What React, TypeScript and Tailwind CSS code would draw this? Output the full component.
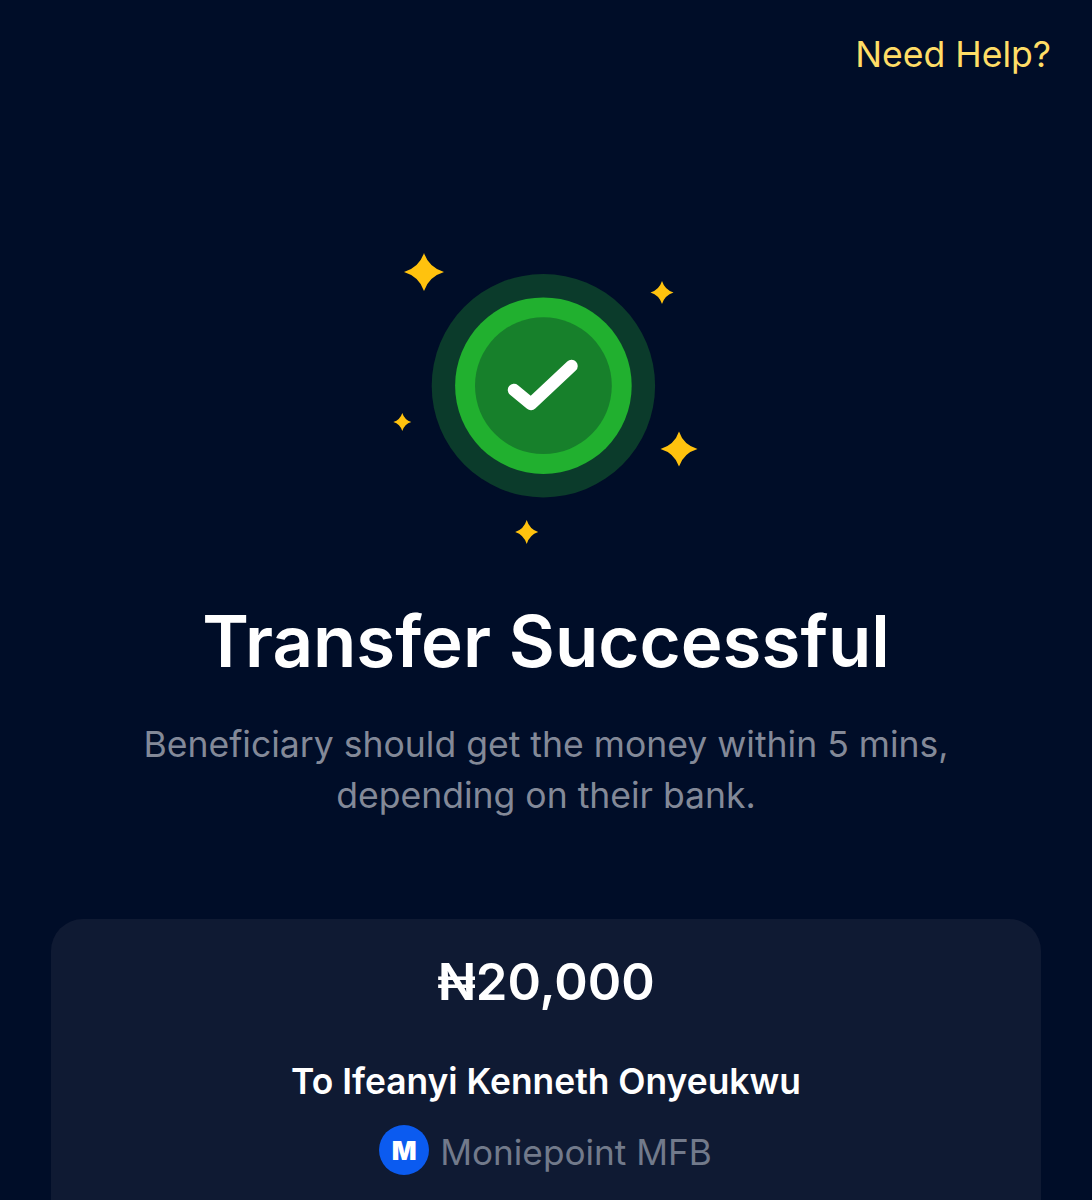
function Sparkle({ cx, cy, rx, ry }: { cx: number; cy: number; rx: number; ry: number }) {
  const k = 0.24
  const d = `M${cx} ${cy - ry}Q${cx + rx * k} ${cy - ry * k} ${cx + rx} ${cy}Q${cx + rx * k} ${cy + ry * k} ${cx} ${cy + ry}Q${cx - rx * k} ${cy + ry * k} ${cx - rx} ${cy}Q${cx - rx * k} ${cy - ry * k} ${cx} ${cy - ry}Z`
  return <path d={d} fill="#FFC20E" />
}

function SuccessBadge() {
  return (
    <svg width="332" height="320" viewBox="0 0 332 320" fill="none">
      <circle cx="163.4" cy="145.7" r="111.7" fill="#0B3B2B" />
      <circle cx="163.4" cy="145.7" r="88.3" fill="#21B02F" />
      <circle cx="163.4" cy="145.7" r="68.4" fill="#17802B" />
      <path
        d="M134 150L151 164L191.5 126"
        stroke="#fff"
        strokeWidth="12.5"
        strokeLinecap="round"
        strokeLinejoin="round"
      />
      <Sparkle cx={44} cy={32} rx={20} ry={19} />
      <Sparkle cx={282} cy={52.5} rx={11.5} ry={11.5} />
      <Sparkle cx={22.3} cy={182} rx={9} ry={9} />
      <Sparkle cx={299} cy={209} rx={18.5} ry={17.5} />
      <Sparkle cx={146.7} cy={292} rx={11.5} ry={12} />
    </svg>
  )
}

export default function App() {
  return (
    <div className="h-[1200px] overflow-hidden bg-[#000D28] font-['Inter',sans-serif]">
      <div className="flex justify-end pt-[33px] pr-[41px]">
        <a className="text-[35.6px] leading-[43px] text-[#FFDD66]">Need Help?</a>
      </div>

      <div className="mt-[164px] flex justify-center">
        <SuccessBadge />
      </div>

      <h1 className="mt-[37px] text-center text-[70.8px] leading-[88px] font-semibold text-white">
        Transfer Successful
      </h1>
      <p className="mt-[34px] text-center text-[35.55px] leading-[51px] text-[#838998]">
        Beneficiary should get the money within 5 mins,
        <br />
        depending on their bank.
      </p>

      <div className="mx-[51px] mt-[98px] h-[400px] rounded-[32px] bg-[#0F1A33] pt-[31px] text-center">
        <div className="text-[50.8px] leading-[63px] font-semibold text-white">₦20,000</div>
        <div className="mt-[47px] text-[35.4px] leading-[44px] font-semibold text-white">
          To Ifeanyi Kenneth Onyeukwu
        </div>
        <div className="mt-[21px] flex items-center justify-center gap-[11px] pr-[1px]">
          <div className="mb-[3px] flex h-[50px] w-[50px] items-center justify-center rounded-full bg-[#0B5BF0] text-[26px] font-black text-white">
            M
          </div>
          <span className="text-[35.2px] leading-[44px] text-[#727A8B]">Moniepoint MFB</span>
        </div>
      </div>
    </div>
  )
}
